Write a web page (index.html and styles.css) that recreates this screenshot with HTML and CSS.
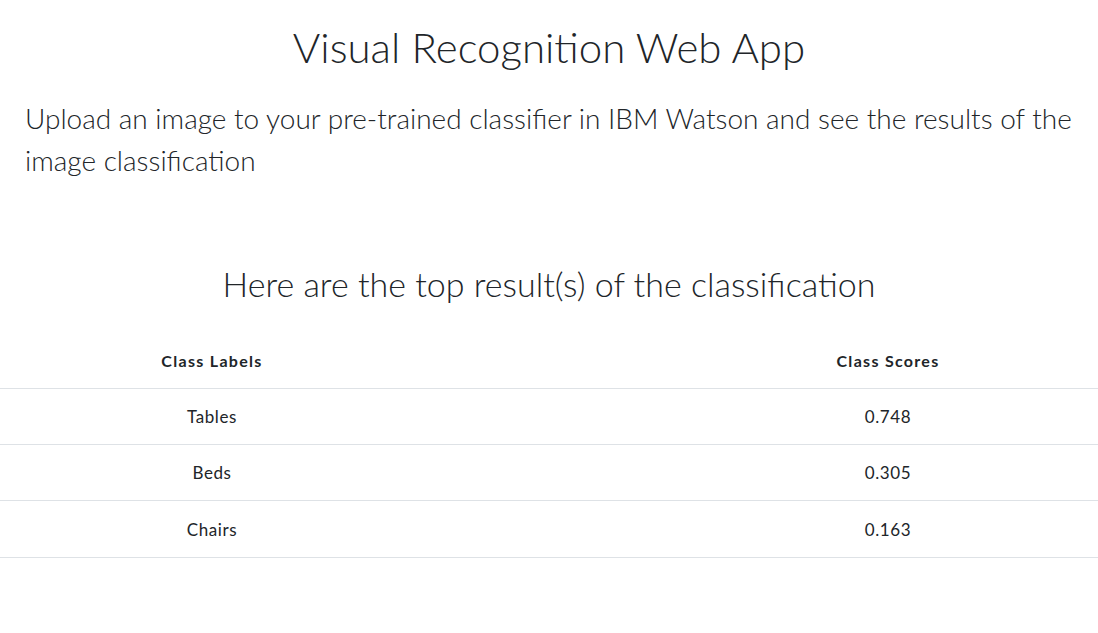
FILE: index.html
```html
<!DOCTYPE html>
<html>
<head>
<meta charset="utf-8">
<link rel="stylesheet" href="styles.css">
</head>
<body>
<div class="page">
  <h1 class="title">Visual Recognition Web App</h1>
  <p class="lead">Upload an image to your pre-trained classifier in IBM Watson and see the results of the image classification</p>
  <h2 class="subtitle">Here are the top result(s) of the classification</h2>
  <div class="results">
    <div class="row head">
      <div class="cell c1">Class Labels</div>
      <div class="cell c2"></div>
      <div class="cell c3">Class Scores</div>
    </div>
    <div class="row">
      <div class="cell c1">Tables</div>
      <div class="cell c2"></div>
      <div class="cell c3">0.748</div>
    </div>
    <div class="row">
      <div class="cell c1">Beds</div>
      <div class="cell c2"></div>
      <div class="cell c3">0.305</div>
    </div>
    <div class="row last">
      <div class="cell c1">Chairs</div>
      <div class="cell c2"></div>
      <div class="cell c3">0.163</div>
    </div>
  </div>
</div>
</body>
</html>
```
FILE: styles.css
```css
html, body {
  margin: 0;
  padding: 0;
  background: #fff;
}
body {
  font-family: "Lato", "Open Sans", sans-serif;
  font-weight: 300;
  color: #212529;
}
.page {
  display: flex;
  flex-direction: column;
}
.title {
  margin: 23px 0 0;
  font-size: 42px;
  line-height: 48px;
  font-weight: 300;
  text-align: center;
}
.lead {
  margin: 26px 25px 0;
  font-size: 28px;
  line-height: 42px;
  font-weight: 300;
}
.subtitle {
  margin: 83px 0 0;
  font-size: 34px;
  line-height: 40px;
  font-weight: 300;
  text-align: center;
}
.results {
  margin-top: 28px;
  display: flex;
  flex-direction: column;
}
.row {
  box-sizing: border-box;
  display: grid;
  grid-template-columns: 424px 254px 420px;
  height: 56px;
  border-bottom: 1px solid #dee2e6;
  align-items: center;
  font-size: 17px;
  letter-spacing: 0.6px;
  font-weight: 400;
}
.row.head {
  font-weight: 700;
  font-size: 16px;
  letter-spacing: 1.3px;
  height: 57px;
}
.row.last {
  height: 57px;
}
.cell {
  text-align: center;
}
```
